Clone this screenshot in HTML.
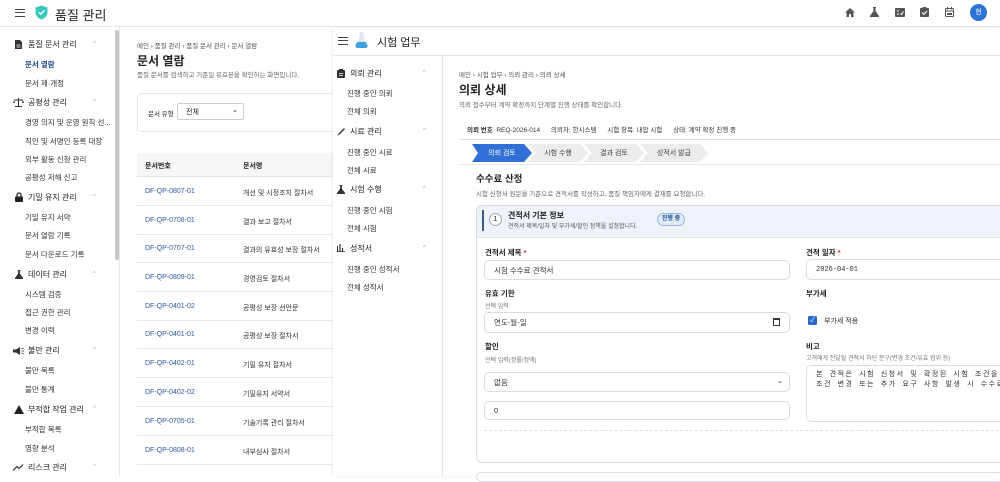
<!DOCTYPE html>
<html><head><meta charset="utf-8">
<style>
*{box-sizing:border-box;margin:0;padding:0}
body{width:1000px;height:476px;overflow:hidden;background:#fff;font-family:"Liberation Sans","Noto Sans CJK KR",sans-serif;color:#222;position:relative;font-size:8px}
.abs{position:absolute;white-space:nowrap}
.top{position:absolute;left:0;top:0;width:1000px;height:27px;border-bottom:1px solid #e6e6e6;background:#fff}
.ham{position:absolute;width:10px;height:8px;border-top:1.5px solid #444;border-bottom:1.5px solid #444}
.ham:after{content:"";position:absolute;left:0;right:0;top:2px;border-top:1.5px solid #444}
.nav{position:absolute;font-size:7.5px;color:#333;white-space:nowrap}
.navh{font-size:8px;color:#222}
.ic{position:absolute}
.car{position:absolute;font-size:6px;color:#aaa}
.row{position:absolute;left:137px;width:196px;height:29px;border-bottom:1px solid #e8e8e8;font-size:7px}
.row .a{position:absolute;left:8px;top:11px;color:#2d5aa0}
.row .b{position:absolute;left:106px;top:11px;color:#333}
.lbl{position:absolute;font-size:7.5px;font-weight:bold;color:#222;white-space:nowrap}
.lbl i{color:#d33;font-style:normal}
.sub{position:absolute;font-size:6px;color:#777;white-space:nowrap}
.inp{position:absolute;border:1px solid #dcdcdc;border-radius:5px;background:#fff;font-size:7.5px;color:#333;padding-left:9px;display:flex;align-items:center}
.step{position:absolute;top:144px;height:18px;font-size:7px;color:#444;display:flex;align-items:center;justify-content:center;clip-path:polygon(0 0,calc(100% - 8px) 0,100% 50%,calc(100% - 8px) 100%,0 100%,8px 50%);background:#ececef}
</style></head><body>

<div class="top">
  <div class="ham" style="left:15px;top:9px"></div>
  <svg class="abs" style="left:35px;top:5px" width="13" height="15" viewBox="0 0 13 15"><path d="M6.5 0.5 L12.5 2.5 V7 C12.5 11 9.5 13.5 6.5 14.5 C3.5 13.5 0.5 11 0.5 7 V2.5 Z" fill="#3cc6c0"/><path d="M3.8 7.3 L5.8 9.2 L9.3 5.5" stroke="#fff" stroke-width="1.3" fill="none"/></svg>
  <div class="abs" style="left:55px;top:5px;font-size:13px;color:#222">품질 관리</div>
  <svg class="abs" style="left:845px;top:8px" width="10" height="9" viewBox="0 0 10 9"><path d="M5 0 L10 4.5 H8.5 V9 H6 V6 H4 V9 H1.5 V4.5 H0 Z" fill="#555"/></svg>
  <svg class="abs" style="left:870px;top:7px" width="9" height="10" viewBox="0 0 9 10"><path d="M3 0 H6 V1 H5.5 V4 L9 9 V10 H0 V9 L3.5 4 V1 H3 Z" fill="#555"/></svg>
  <svg class="abs" style="left:895px;top:8px" width="10" height="9" viewBox="0 0 10 9"><rect width="10" height="9" rx="1" fill="#555"/><path d="M2 3 H4 M2 6 H4 M5.5 5.5 L6.5 6.5 L8.5 3.5" stroke="#fff" stroke-width="1" fill="none"/></svg>
  <svg class="abs" style="left:920px;top:7px" width="9" height="10" viewBox="0 0 9 10"><rect y="1" width="9" height="9" rx="1" fill="#555"/><rect x="2.5" y="0" width="4" height="2" fill="#555"/><path d="M2 5.5 L3.8 7.3 L7 4" stroke="#fff" stroke-width="1.2" fill="none"/></svg>
  <svg class="abs" style="left:945px;top:7px" width="9" height="10" viewBox="0 0 9 10"><rect x="0.5" y="1.5" width="8" height="8" rx="1" fill="none" stroke="#555"/><path d="M0.5 4 H8.5" stroke="#555"/><path d="M2.5 0 V2.5 M6.5 0 V2.5" stroke="#555"/><rect x="2" y="6" width="5" height="2" fill="#555"/></svg>
  <div class="abs" style="left:970px;top:4px;width:17px;height:17px;border-radius:50%;background:#2f72d6;color:#fff;font-size:7px;text-align:center;line-height:17px">현</div>
</div>

<!-- left sidebar -->
<div class="abs" style="left:0;top:27px;width:120px;height:449px;border-right:1px solid #e6e6e6"></div>
<div class="abs" style="left:115px;top:30px;width:4px;height:230px;background:#c8c8c8;border-radius:2px"></div>
<svg class="ic" style="left:15px;top:40px" width="7" height="9" viewBox="0 0 7 9"><path d="M0 0 H5 L7 2 V9 H0 Z" fill="#333"/><path d="M1.5 5 H5.5 M1.5 7 H5.5" stroke="#fff" stroke-width="0.8"/></svg>
<div class="nav navh" style="left:28px;top:39px">품질 문서 관리</div><div class="car" style="left:93px;top:41px">^</div>
<div class="nav" style="left:25px;top:59px;color:#1e4d8c;font-weight:bold">문서 열람</div>
<div class="nav" style="left:25px;top:78px">문서 제·개정</div>
<svg class="ic" style="left:13px;top:98px" width="11" height="9" viewBox="0 0 11 9"><path d="M5.5 0 V8 M2 8.5 H9 M1 2 H10" stroke="#333" stroke-width="1"/><path d="M1 2 L0 5 H2 Z M10 2 L9 5 H11 Z" fill="#333"/></svg>
<div class="nav navh" style="left:28px;top:97px">공평성 관리</div><div class="car" style="left:93px;top:99px">^</div>
<div class="nav" style="left:25px;top:117px">경영 의지 및 운영 원칙 선...</div>
<div class="nav" style="left:25px;top:136px">직인 및 서명인 등록 대장</div>
<div class="nav" style="left:25px;top:154px">외부 활동 신청 관리</div>
<div class="nav" style="left:25px;top:172px">공평성 저해 신고</div>
<svg class="ic" style="left:15px;top:192px" width="8" height="10" viewBox="0 0 8 10"><path d="M2 4.5 V3 A2 2 0 0 1 6 3 V4.5" stroke="#222" stroke-width="1.3" fill="none"/><rect y="4.5" width="8" height="5.5" rx="1" fill="#222"/></svg>
<div class="nav navh" style="left:28px;top:192px">기밀 유지 관리</div><div class="car" style="left:93px;top:194px">^</div>
<div class="nav" style="left:25px;top:212px">기밀 유지 서약</div>
<div class="nav" style="left:25px;top:230px">문서 열람 기록</div>
<div class="nav" style="left:25px;top:249px">문서 다운로드 기록</div>
<svg class="ic" style="left:15px;top:270px" width="8" height="9" viewBox="0 0 9 10"><path d="M3 0 H6 V1 H5.5 V4 L9 9 V10 H0 V9 L3.5 4 V1 H3 Z" fill="#333"/></svg>
<div class="nav navh" style="left:28px;top:269px">데이터 관리</div><div class="car" style="left:93px;top:271px">^</div>
<div class="nav" style="left:25px;top:289px">시스템 검증</div>
<div class="nav" style="left:25px;top:307px">접근 권한 관리</div>
<div class="nav" style="left:25px;top:325px">변경 이력</div>
<svg class="ic" style="left:13px;top:347px" width="11" height="8" viewBox="0 0 11 8"><path d="M0 2.5 H3 L7 0 V8 L3 5.5 H0 Z" fill="#333"/><path d="M8.5 2 L10.5 1 M8.5 4 H11 M8.5 6 L10.5 7" stroke="#333" stroke-width="0.8"/></svg>
<div class="nav navh" style="left:28px;top:345px">불만 관리</div><div class="car" style="left:93px;top:347px">^</div>
<div class="nav" style="left:25px;top:365px">불만 목록</div>
<div class="nav" style="left:25px;top:384px">불만 통계</div>
<svg class="ic" style="left:14px;top:405px" width="10" height="9" viewBox="0 0 10 9"><path d="M5 0 L10 9 H0 Z" fill="#222"/></svg>
<div class="nav navh" style="left:28px;top:404px">부적합 작업 관리</div><div class="car" style="left:93px;top:406px">^</div>
<div class="nav" style="left:25px;top:424px">부적합 목록</div>
<div class="nav" style="left:25px;top:443px">영향 분석</div>
<svg class="ic" style="left:13px;top:464px" width="11" height="7" viewBox="0 0 11 7"><path d="M0 6.5 L4 2.5 L6 4.5 L10 0.5" stroke="#333" stroke-width="1.2" fill="none"/></svg>
<div class="nav navh" style="left:28px;top:462px">리스크 관리</div><div class="car" style="left:93px;top:464px">^</div>

<!-- main -->
<div class="abs" style="left:137px;top:40px;font-size:6.5px;color:#555">메인 › 품질 관리 › 품질 문서 관리 › 문서 열람</div>
<div class="abs" style="left:137px;top:52px;font-size:12px;font-weight:bold">문서 열람</div>
<div class="abs" style="left:137px;top:69px;font-size:6.5px;color:#666">품질 문서를 검색하고 기준일 유효본을 확인하는 화면입니다.</div>
<div class="abs" style="left:137px;top:93px;width:210px;height:39px;border:1px solid #e6e6e6;border-radius:5px"></div>
<div class="abs" style="left:148px;top:108px;font-size:6.5px">문서 유형</div>
<div class="abs" style="left:177px;top:103px;width:67px;height:17px;border:1px solid #ccc;border-radius:2px;font-size:7px;padding:3px 0 0 8px">전체<span style="position:absolute;right:5px;top:2px">⌄</span></div>
<div class="abs" style="left:137px;top:153px;width:210px;height:24px;background:#f5f6f8;border-bottom:1px solid #e6e6e6"></div>
<div class="abs" style="left:145px;top:161px;font-size:7px;font-weight:bold">문서번호</div>
<div class="abs" style="left:243px;top:161px;font-size:7px;font-weight:bold">문서명</div>
<div class="row" style="top:177px"><span class="a">DF-QP-0807-01</span><span class="b">개선 및 시정조치 절차서</span></div>
<div class="row" style="top:206px"><span class="a">DF-QP-0708-01</span><span class="b">결과 보고 절차서</span></div>
<div class="row" style="top:234px"><span class="a">DF-QP-0707-01</span><span class="b">결과의 유효성 보장 절차서</span></div>
<div class="row" style="top:263px"><span class="a">DF-QP-0809-01</span><span class="b">경영검토 절차서</span></div>
<div class="row" style="top:292px"><span class="a">DF-QP-0401-02</span><span class="b">공평성 보장 선언문</span></div>
<div class="row" style="top:320px"><span class="a">DF-QP-0401-01</span><span class="b">공평성 보장 절차서</span></div>
<div class="row" style="top:349px"><span class="a">DF-QP-0402-01</span><span class="b">기밀 유지 절차서</span></div>
<div class="row" style="top:378px"><span class="a">DF-QP-0402-02</span><span class="b">기밀유지 서약서</span></div>
<div class="row" style="top:407px"><span class="a">DF-QP-0705-01</span><span class="b">기술기록 관리 절차서</span></div>
<div class="row" style="top:436px"><span class="a">DF-QP-0808-01</span><span class="b">내부심사 절차서</span></div>

<!-- overlay window -->
<div class="abs" style="left:333px;top:28px;width:667px;height:448px;background:#fff;box-shadow:-1px 0 3px rgba(0,0,0,0.08)"></div>
<div class="abs" style="left:333px;top:55px;width:667px;border-top:1px solid #e6e6e6"></div>
<div class="ham" style="left:338px;top:37px"></div>
<svg class="abs" style="left:355px;top:32px" width="13" height="16" viewBox="0 0 13 16"><path d="M4.5 0 H8.5 V5 L12.5 13 Q13 16 10 16 H3 Q0 16 0.5 13 L4.5 5 Z" fill="#dde9f4"/><path d="M2.2 10 H10.8 L12.5 13.2 Q13 16 10 16 H3 Q0 16 0.5 13.2 Z" fill="#3fa0dc"/></svg>
<div class="abs" style="left:377px;top:34px;font-size:11px">시험 업무</div>
<div class="abs" style="left:442px;top:56px;height:420px;border-left:1px solid #e6e6e6"></div>

<svg class="ic" style="left:337px;top:69px" width="8" height="9" viewBox="0 0 8 9"><rect y="1" width="8" height="8" rx="1" fill="#333"/><rect x="2" y="0" width="4" height="2" fill="#333"/><path d="M2 4.5 H6 M2 6.5 H6" stroke="#fff" stroke-width="0.8"/></svg>
<div class="nav navh" style="left:350px;top:68px">의뢰 관리</div><div class="car" style="left:423px;top:70px">^</div>
<div class="nav" style="left:347px;top:88px">진행 중인 의뢰</div>
<div class="nav" style="left:347px;top:106px">전체 의뢰</div>
<svg class="ic" style="left:337px;top:127px" width="9" height="9" viewBox="0 0 9 9"><path d="M0 9 L2 6 L7 1 L8 2 L3 7 Z" fill="#333"/></svg>
<div class="nav navh" style="left:350px;top:126px">시료 관리</div><div class="car" style="left:423px;top:128px">^</div>
<div class="nav" style="left:347px;top:147px">진행 중인 시료</div>
<div class="nav" style="left:347px;top:165px">전체 시료</div>
<svg class="ic" style="left:337px;top:185px" width="8" height="9" viewBox="0 0 9 10"><path d="M3 0 H6 V1 H5.5 V4 L9 9 V10 H0 V9 L3.5 4 V1 H3 Z" fill="#333"/></svg>
<div class="nav navh" style="left:350px;top:184px">시험 수행</div><div class="car" style="left:423px;top:186px">^</div>
<div class="nav" style="left:347px;top:205px">진행 중인 시험</div>
<div class="nav" style="left:347px;top:223px">전체 시험</div>
<svg class="ic" style="left:337px;top:244px" width="8" height="8" viewBox="0 0 8 8"><path d="M0.5 2 V8 M3 0 V8 M5.5 4 V8 M0 7.8 H8" stroke="#333" stroke-width="1.2"/></svg>
<div class="nav navh" style="left:350px;top:243px">성적서</div><div class="car" style="left:423px;top:245px">^</div>
<div class="nav" style="left:347px;top:264px">진행 중인 성적서</div>
<div class="nav" style="left:347px;top:282px">전체 성적서</div>

<div class="abs" style="left:459px;top:69px;font-size:6.5px;color:#555">메인 › 시험 업무 › 의뢰 관리 › 의뢰 상세</div>
<div class="abs" style="left:459px;top:81px;font-size:12px;font-weight:bold">의뢰 상세</div>
<div class="abs" style="left:459px;top:99px;font-size:6.5px;color:#666">의뢰 접수부터 계약 확정까지 단계별 진행 상태를 확인합니다.</div>
<div class="abs" style="left:467px;top:124px;font-size:6.5px;color:#333"><b>의뢰 번호</b>&nbsp; REQ-2026-014 &nbsp;&nbsp;&nbsp;&nbsp; 의뢰자: 한시스템 &nbsp;&nbsp;&nbsp;&nbsp; 시험 항목: 내압 시험 &nbsp;&nbsp;&nbsp;&nbsp; 상태: 계약 확정 진행 중</div>
<div class="abs" style="left:459px;top:139px;width:541px;border-top:1px solid #e0e0e0"></div>
<div class="step" style="left:472px;width:60px;background:#2f6fd6;color:#fff;clip-path:polygon(0 0,calc(100% - 8px) 0,100% 50%,calc(100% - 8px) 100%,0 100%,6px 50%)">의뢰 검토</div>
<div class="step" style="left:528px;width:60px">시험 수행</div>
<div class="step" style="left:584px;width:60px">결과 검토</div>
<div class="step" style="left:640px;width:68px">성적서 발급</div>
<div class="abs" style="left:459px;top:164px;width:541px;border-top:1px solid #e6e6e6"></div>

<div class="abs" style="left:476px;top:171px;font-size:9.5px;font-weight:bold">수수료 산정</div>
<div class="abs" style="left:476px;top:188px;font-size:6.5px;color:#666">시험 신청서 원문을 기준으로 견적서를 작성하고, 품질 책임자에게 결재를 요청합니다.</div>

<div class="abs" style="left:476px;top:205px;width:540px;height:258px;border:1px solid #d8dce2;border-radius:6px;overflow:hidden">
  <div style="position:absolute;left:0;top:0;right:0;height:32px;background:#eef3fa;border-bottom:1px solid #e0e6ee"></div>
</div>
<div class="abs" style="left:482px;top:210px;width:2px;height:21px;background:#3a5a8a"></div>
<div class="abs" style="left:489px;top:213px;width:13px;height:13px;border:1px solid #9aa8bd;border-radius:50%;background:#fff;font-size:7px;text-align:center;line-height:11px">1</div>
<div class="abs" style="left:508px;top:210px;font-size:8px;font-weight:bold">견적서 기본 정보</div>
<div class="abs" style="left:508px;top:221px;font-size:6px;color:#555">견적서 제목/일자 및 부가세/할인 정책을 설정합니다.</div>
<div class="abs" style="left:657px;top:213px;width:28px;height:13px;border:1px solid #9ab8e0;border-radius:7px;background:#dfeafa;font-size:6px;color:#1e4d8c;text-align:center;line-height:11px;font-weight:bold">진행 중</div>

<div class="lbl" style="left:485px;top:247px">견적서 제목 <i>*</i></div>
<div class="inp" style="left:484px;top:260px;width:306px;height:20px">시험 수수료 견적서</div>
<div class="lbl" style="left:806px;top:247px">견적 일자 <i>*</i></div>
<div class="inp" style="left:806px;top:259px;width:210px;height:21px;font-family:'Liberation Mono',monospace;font-size:7px">2026-04-01</div>
<div class="lbl" style="left:485px;top:288px">유효 기한</div>
<div class="sub" style="left:485px;top:301px">선택 입력</div>
<div class="inp" style="left:484px;top:312px;width:306px;height:21px">연도-월-일<span style="position:absolute;right:9px;top:5px;width:7px;height:8px;border:1px solid #333;border-top-width:2px"></span></div>
<div class="lbl" style="left:806px;top:288px">부가세</div>
<div class="abs" style="left:808px;top:316px;width:9px;height:9px;background:#2a68c8;border-radius:1.5px;color:#fff;font-size:7px;line-height:9px;text-align:center">✓</div>
<div class="abs" style="left:824px;top:316px;font-size:7px;color:#333">부가세 적용</div>
<div class="lbl" style="left:485px;top:341px">할인</div>
<div class="sub" style="left:485px;top:355px">선택 입력(정률/정액)</div>
<div class="inp" style="left:484px;top:372px;width:306px;height:20px">없음<span style="position:absolute;right:6px;top:4px;font-size:7px">⌄</span></div>
<div class="inp" style="left:484px;top:401px;width:306px;height:19px">0</div>
<div class="lbl" style="left:806px;top:341px">비고</div>
<div class="sub" style="left:806px;top:353px">고객에게 전달될 견적서 하단 문구(변경 조건/유효 범위 등)</div>
<div class="inp" style="left:806px;top:365px;width:210px;height:57px;align-items:flex-start;padding-top:4px;font-family:'Liberation Mono','Noto Sans CJK KR',monospace;font-size:7px;line-height:10px;letter-spacing:1.5px;white-space:nowrap;overflow:hidden">본 견적은 시험 신청서 및 확정된 시험 조건을 기<br>조건 변경 또는 추가 요구 사항 발생 시 수수료가</div>
<div class="abs" style="left:484px;top:430px;width:520px;border-top:1px dashed #e0e0e0"></div>
<div class="abs" style="left:476px;top:472px;width:540px;height:10px;border:1px solid #d8dce2;border-radius:6px"></div>
</body></html>
